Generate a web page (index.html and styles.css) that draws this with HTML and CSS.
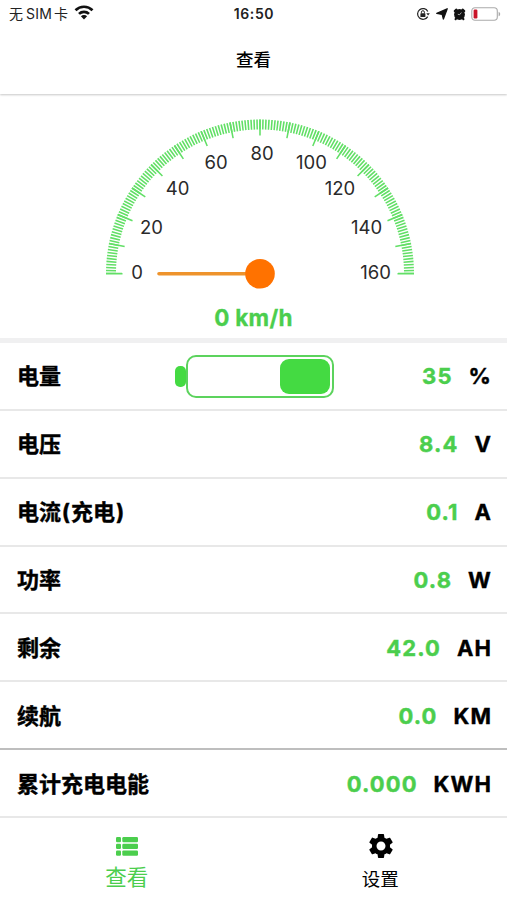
FILE: index.html
```html
<!DOCTYPE html>
<html lang="zh-CN">
<head>
<meta charset="utf-8">
<title>查看</title>
<link rel="stylesheet" href="styles.css">
</head>
<body>
<div class="app">
  <header class="header">
    <div class="status">
      <div class="carrier"><span>无<span class="sim">SIM</span>卡</span>
        <svg class="wifi" width="20" height="15" viewBox="0 0 20 15" fill="none" stroke="#111" stroke-width="2.7"><path d="M1.5 5.2a12.2 12.2 0 0 1 17 0M5 8.9a7.1 7.1 0 0 1 10 0"/><path d="M10 14.5l-3.1-3.2a4.4 4.4 0 0 1 6.2 0z" fill="#111" stroke="none"/></svg>
      </div>
      <time class="clock">16:50</time>
      <div class="indicators">
        <svg width="14" height="14" viewBox="0 0 14 14"><path d="M11.7 9.6A5.4 5.4 0 1 1 11.8 4.5" fill="none" stroke="#222" stroke-width="1.2"/><path d="M10.3 6.2h3.5l-1.7 2.4z" fill="#222"/><rect x="4.4" y="6.2" width="5" height="3.8" rx=".6" fill="#222"/><path d="M5.4 6.4V5.2a1.5 1.5 0 0 1 3 0v1.2" fill="none" stroke="#222"/></svg>
        <svg width="12" height="12" viewBox="0 0 12 12"><path d="M11.2.8L7.4 11 6.2 6.4.8 5.4z" fill="#111" stroke="#111" stroke-width="1.3" stroke-linejoin="round"/></svg>
        <svg width="13" height="14" viewBox="0 0 13 14"><path d="M3.400 2.600L1.800 4M9.600 2.600L11.200 4M3.200 11.400l-.6.8M9.800 11.400l.6.8" stroke="#111" stroke-width="2.200" stroke-linecap="round"/><circle cx="6.500" cy="7.500" r="5.400" fill="#111"/><path d="M6.700 7.700L8.400 5.500M6.700 7.700L4.800 7.300" stroke="#ccc" stroke-width=".8"/></svg>
        <svg width="30" height="14" viewBox="0 0 30 14"><rect x=".8" y=".8" width="25.500" height="12.400" rx="3.200" fill="#fff" stroke="#aaa" stroke-width="1.100"/><rect x="2.600" y="2.500" width="3.800" height="9" rx="1.200" fill="#c91429"/><path d="M27.600 4.700c2.100.8 2.100 3.800 0 4.600z" fill="#aaa"/></svg>
      </div>
    </div>
    <h1 class="title">查看</h1>
  </header>

  <section class="speed">
    <svg class="gauge" width="320" height="180" viewBox="0 0 320 180">
      <path class="ticks minor" pathLength="160" d="M11 163.500a149 149 0 0 1 298 0"/>
      <path class="ticks major" pathLength="16" d="M14 163.500a146 146 0 0 1 292 0"/>
      <path class="ticks" stroke-width="1.500" d="M6 163.700h16.500M297.500 163.700H314"/>
      <g class="scale">
        <text x="37" y="169">0</text><text x="51.500" y="124">20</text><text x="77.500" y="85">40</text><text x="116" y="59">60</text><text x="162" y="50">80</text><text x="211.500" y="59">100</text><text x="240" y="85">120</text><text x="266.500" y="124">140</text><text x="275.500" y="169">160</text>
      </g>
      <path class="needle" d="M59 163.800H160"/>
      <circle class="hub" cx="160" cy="163.800" r="14.800"/>
    </svg>
    <p class="reading">0 km/h</p>
  </section>

  <main class="list">
    <div class="row"><span class="label">电量</span>
      <span class="battery"><i class="tip"></i><i class="shell"><i class="charge"></i></i></span>
      <span class="data"><b>35</b><em>%</em></span></div>
    <div class="row"><span class="label">电压</span><span class="data"><b>8.4</b><em>V</em></span></div>
    <div class="row"><span class="label">电流<span class="paren">(</span>充电<span class="paren">)</span></span><span class="data"><b>0.1</b><em>A</em></span></div>
    <div class="row"><span class="label">功率</span><span class="data"><b>0.8</b><em>W</em></span></div>
    <div class="row"><span class="label">剩余</span><span class="data"><b>42.0</b><em>AH</em></span></div>
    <div class="row section-end"><span class="label">续航</span><span class="data"><b>0.0</b><em>KM</em></span></div>
    <div class="row"><span class="label">累计充电电能</span><span class="data"><b>0.000</b><em>KWH</em></span></div>
  </main>

  <nav class="tabs">
    <a class="tab active">
      <svg width="22" height="19" viewBox="0 0 22 19" fill="currentColor"><rect width="5" height="5.300" rx="1.200"/><rect x="6.300" width="15.700" height="5.300" rx="1.200"/><rect y="6.700" width="5" height="5.300" rx="1.200"/><rect x="6.300" y="6.700" width="15.700" height="5.300" rx="1.200"/><rect y="13.400" width="5" height="5.300" rx="1.200"/><rect x="6.300" y="13.400" width="15.700" height="5.300" rx="1.200"/></svg>
      <span>查看</span>
    </a>
    <a class="tab">
      <svg width="30" height="30" viewBox="0 0 24 24" fill="currentColor"><path d="M19.140 12.940c.04-.3.060-.61.060-.94 0-.32-.02-.64-.07-.94l2.030-1.580c.18-.14.230-.41.120-.61l-1.920-3.320c-.12-.22-.37-.29-.59-.22l-2.390.96c-.5-.38-1.030-.7-1.620-.94l-.36-2.540c-.04-.24-.24-.41-.48-.41h-3.840c-.24 0-.43.170-.47.410l-.36 2.540c-.59.240-1.130.570-1.620.940l-2.390-.96c-.22-.08-.47 0-.59.220L2.740 8.870c-.12.210-.08.470.120.610l2.030 1.580c-.05.3-.09.630-.09.940s.02.640.07.940l-2.030 1.580c-.18.140-.23.410-.12.610l1.920 3.320c.12.220.37.290.59.220l2.390-.96c.5.380 1.030.7 1.620.94l.36 2.540c.05.240.24.410.48.410h3.840c.24 0 .44-.17.470-.41l.36-2.540c.59-.24 1.130-.56 1.620-.94l2.390.96c.22.080.47 0 .59-.22l1.920-3.320c.12-.22.070-.47-.12-.61l-2.010-1.580zM12 15.600c-1.980 0-3.600-1.620-3.600-3.600s1.620-3.600 3.600-3.600 3.600 1.620 3.600 3.600-1.620 3.600-3.600 3.600z"/></svg>
      <span>设置</span>
    </a>
  </nav>
</div>
</body>
</html>
```
FILE: styles.css
```css
* { box-sizing: border-box; }
body { margin: 0; background: #fff; color: #000; font-family: Inter, "Noto Sans CJK SC", sans-serif; }
.app { height: 900px; display: flex; flex-direction: column; overflow: hidden; }
.header { height: 94px; flex: none; box-shadow: 0 1px 2px #c8c8c8; }
.status { height: 27px; display: grid; grid-template-columns: 1fr auto 1fr; align-items: center; padding: 0 6px 0 9px; color: #222; }
.carrier { display: flex; align-items: center; gap: 6px; font-size: 14px; line-height: 20px; white-space: nowrap; }
.sim { margin: 0 2px 0 3px; letter-spacing: .2px; }
.wifi { margin-top: -2px; }
.clock { font-size: 14px; font-weight: 600; letter-spacing: .6px; margin-right: 2px; }
.indicators { display: flex; align-items: center; justify-content: flex-end; gap: 5px; }
.indicators svg:first-child { margin-right: 1px; }
.title { margin: 20px 0 0; text-align: center; font-size: 17.500px; line-height: 26px; font-weight: 500; }
.speed { height: 249px; flex: none; padding-top: 16px; border-bottom: 5px solid #f0f0f1; display: flex; flex-direction: column; align-items: center; }
.gauge { flex: none; margin-left: 13px; }
.ticks { fill: none; stroke: #62df66; }
.minor { stroke-width: 10; stroke-dasharray: .54 .46; stroke-dashoffset: .27; }
.major { stroke-width: 16; stroke-dasharray: .056 .944; stroke-dashoffset: .028; }
.scale { fill: #2a2a2a; font-size: 18.500px; text-anchor: middle; }
.needle { stroke: #ee932c; stroke-width: 3.600; stroke-linecap: round; }
.hub { fill: #ff7200; }
.reading { margin: 13px 0 0; font-size: 22.500px; line-height: 30px; font-weight: 700; letter-spacing: .3px; color: #4bce4d; -webkit-text-stroke: .3px #4bce4d; }
.list { height: 475px; flex: none; display: grid; grid-template-rows: repeat(7, 1fr); }
.row { display: flex; align-items: center; justify-content: space-between; padding: 1px 16px 0 17px; border-bottom: 2px solid #e8e8e8; position: relative; font-size: 22px; line-height: 32px; font-weight: 700; }
.section-end { border-color: #bebebe; }
.label { -webkit-text-stroke: .4px #000; }
.paren { display: inline-block; width: 10px; text-align: center; }
.data { display: flex; gap: 16px; letter-spacing: 1.100px; }
.data b { color: #4bce4d; font-weight: 700; -webkit-text-stroke: .4px #4bce4d; }
.data em { font-style: normal; font-weight: 700; margin-right: -1px; -webkit-text-stroke: .4px #000; }
.battery { position: absolute; left: 175px; top: 12px; display: flex; align-items: center; }
.tip { width: 11px; height: 21px; border-radius: 5px; background: #44da42; }
.shell { width: 148px; height: 43px; border: 2px solid #5cd35d; border-radius: 10px; padding: 2px; display: flex; justify-content: flex-end; }
.charge { width: 50px; border-radius: 9px; background: #44da42; }
.tabs { flex: 1; display: grid; grid-template-columns: 1fr 1fr; }
.tab { display: flex; flex-direction: column; align-items: center; font-size: 18.500px; line-height: 26px; }
.tab svg { margin: 13px 0 0 1px; }
.tab span { margin-top: 5px; }
.active { color: #4bce4d; font-size: 21.500px; line-height: 30px; }
.active svg { margin: 19px 0 0; }
.active span { margin-top: 6px; }
```
